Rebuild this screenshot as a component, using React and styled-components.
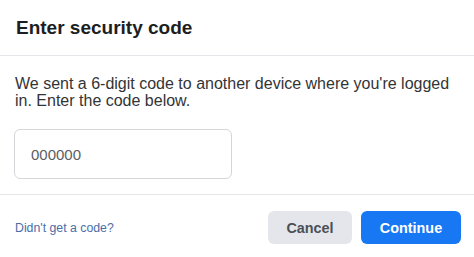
import React from "react";
import styled, { createGlobalStyle } from "styled-components";

const GlobalStyle = createGlobalStyle`
  html, body {
    margin: 0;
    padding: 0;
    background: #ffffff;
  }
  body {
    font-family: "Liberation Sans", Arial, Helvetica, sans-serif;
    -webkit-font-smoothing: antialiased;
  }
`;

export default function App() {
  return (
    <>
      <GlobalStyle />
      <Dialog>
        <Header>
          <Title>Enter security code</Title>
        </Header>
        <Body>
          <Message>
            We sent a 6-digit code to another device where you're logged in.
            Enter the code below.
          </Message>
          <CodeInput type="text" defaultValue="000000" />
        </Body>
        <Footer>
          <HelpLink href="#">Didn't get a code?</HelpLink>
          <Actions>
            <Button>Cancel</Button>
            <Button primary>Continue</Button>
          </Actions>
        </Footer>
      </Dialog>
    </>
  );
}

const Dialog = styled.div`
  width: 474px;
  height: 257px;
  display: flex;
  flex-direction: column;
  background: #fff;
  overflow: hidden;
`;

const Header = styled.div`
  height: 55px;
  display: flex;
  align-items: center;
  padding: 0 16px;
  border-bottom: 1px solid #e4e6e9;
`;

const Title = styled.h2`
  margin: 0;
  font-size: 19px;
  line-height: 24px;
  font-weight: bold;
  color: #1c1e21;
`;

const Body = styled.div`
  padding: 20px 16px 15px 15px;
  border-bottom: 1px solid #e4e6e9;
`;

const Message = styled.p`
  margin: 0 0 20px;
  font-size: 16px;
  line-height: 16.5px;
  color: #333436;
`;

const CodeInput = styled.input`
  box-sizing: border-box;
  width: 218px;
  height: 50px;
  margin-left: -1px;
  padding: 0 16px;
  border: 1px solid #d4d6da;
  border-radius: 6px;
  font-family: inherit;
  font-size: 15px;
  color: #5a5d62;
  outline: none;
`;

const Footer = styled.div`
  flex: 1;
  display: flex;
  align-items: flex-start;
  justify-content: space-between;
  padding: 16px 13px 0 15px;
`;

const HelpLink = styled.a`
  margin-top: 10px;
  font-size: 12.3px;
  line-height: 14px;
  color: #4a6ea8;
  text-decoration: none;
`;

const Actions = styled.div`
  display: flex;
  gap: 9px;
`;

const Button = styled.button`
  height: 33px;
  min-width: ${(p) => (p.primary ? "100px" : "84px")};
  padding: 0 16px;
  border: none;
  border-radius: 6px;
  font-family: inherit;
  font-size: 14.4px;
  font-weight: bold;
  background: ${(p) => (p.primary ? "#1877f2" : "#e4e6eb")};
  color: ${(p) => (p.primary ? "#ffffff" : "#4b4f56")};
  cursor: pointer;
`;
